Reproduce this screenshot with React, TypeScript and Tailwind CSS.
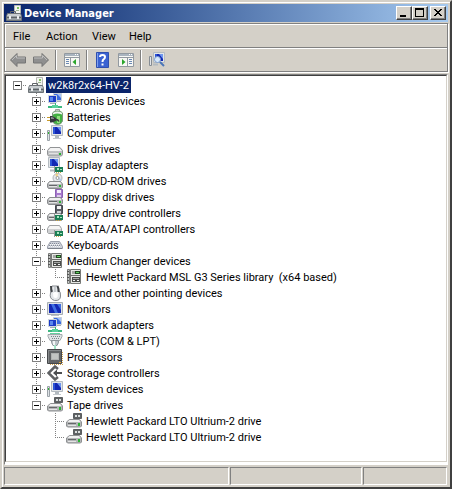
import { useState, type ReactNode } from "react";

type IconName =
  | "root" | "network" | "battery" | "computer" | "disk" | "display" | "dvd"
  | "floppy" | "floppyCtl" | "ide" | "keyboard" | "changer" | "mouse"
  | "monitor" | "port" | "cpu" | "storage" | "tape";

type Device = { label: string; icon: IconName; children?: string[] };

const host = "w2k8r2x64-HV-2";

const devices: Device[] = [
  { label: "Acronis Devices", icon: "network" },
  { label: "Batteries", icon: "battery" },
  { label: "Computer", icon: "computer" },
  { label: "Disk drives", icon: "disk" },
  { label: "Display adapters", icon: "display" },
  { label: "DVD/CD-ROM drives", icon: "dvd" },
  { label: "Floppy disk drives", icon: "floppy" },
  { label: "Floppy drive controllers", icon: "floppyCtl" },
  { label: "IDE ATA/ATAPI controllers", icon: "ide" },
  { label: "Keyboards", icon: "keyboard" },
  {
    label: "Medium Changer devices",
    icon: "changer",
    children: ["Hewlett Packard MSL G3 Series library  (x64 based)"],
  },
  { label: "Mice and other pointing devices", icon: "mouse" },
  { label: "Monitors", icon: "monitor" },
  { label: "Network adapters", icon: "network" },
  { label: "Ports (COM & LPT)", icon: "port" },
  { label: "Processors", icon: "cpu" },
  { label: "Storage controllers", icon: "storage" },
  { label: "System devices", icon: "computer" },
  {
    label: "Tape drives",
    icon: "tape",
    children: ["Hewlett Packard LTO Ultrium-2 drive", "Hewlett Packard LTO Ultrium-2 drive"],
  },
];

/* Low drive body, shared by the drive icons */
const drive = (
  <>
    <path d="M2.500 8.500h11l2 2.500v3l-1 1.500h-13l-1-1.500v-3z" fill="#b4b6b8" stroke="#8a8c8e" />
    <path d="M3 9h10l1.500 2h-13z" fill="#f0f0f0" />
    <path d="M2 12.500h8" stroke="#66686a" />
    <path d="M2 13.500h8" stroke="#e4e4e4" />
    <path d="M12 12h2v2h-2z" fill="#2bb534" />
  </>
);

const card = (
  <>
    <path d="M8 10h8v5H8z" fill="#1c7f56" />
    <path d="M10 11h2v2h-2zM13 12h2v1h-2z" fill="#a9e6c0" />
    <path d="M9 15.500h5" stroke="#c9a94a" strokeDasharray="1 1" />
    <path d="M7.500 9v7" stroke="#9a9a9a" />
  </>
);

const screen = (
  <>
    <path d="M4.500.5h11v10h-11z" fill="#e2e5e8" stroke="#b3bac0" />
    <path d="M6 2h8v7H6z" fill="#1228b4" />
    <path d="M10 2h4v5z" fill="#6f97ee" />
    <path d="M6 2h2v7H6z" fill="#2c55d6" />
  </>
);

const icons: Record<IconName, ReactNode> = {
  root: (
    <>
      <path d="M8.500.5h6v9h-6z" fill="#f3f4f0" stroke="#b5b8b3" />
      <path d="M11 2h2v2h-2z" fill="#7cc35c" />
      <path d="M10 5h3v1h-3z" fill="#9db894" />
      <path d="M4.500 8.500v-2h5v2" fill="none" stroke="#5f6468" />
      <path d="M1.500 8.500h13l1 3v4h-15v-4z" fill="#989fa3" stroke="#6d7377" />
      <path d="M2 9h12l1 2H1z" fill="#c9ced1" />
      <path d="M1 12.500h14" stroke="#5c6266" />
      <path d="M3 11h2v3H3zM11 11h2v3h-2z" fill="#eceef0" />
    </>
  ),
  network: (
    <>
      <path d="M6.500.5h8v7h-8z" fill="#3a6be0" stroke="#c9d1d8" />
      <path d="M10 1h4v4z" fill="#a4c2f7" />
      <path d="M1.500 2.500h8v7h-8z" fill="#1a3cc8" stroke="#cfd6dc" />
      <path d="M3 4h3v4H3z" fill="#5c88ec" />
      <path d="M3 10.500h6M10 8.500h4" stroke="#a6afb5" />
      <path d="M8 10h1v3H8z" fill="#35b77a" />
      <path d="M1 14h14" stroke="#3db880" strokeWidth="2" />
      <path d="M5 12h6v3H5z" fill="#58d39b" />
    </>
  ),
  battery: (
    <>
      <path d="M8.500.5h4v2h-4z" fill="#e6eae6" stroke="#9a9f9a" />
      <path d="M5.500 4q1-2 5-2t5 2v8q-1 3.500-5 3.500t-5-3.500z" fill="#42b042" stroke="#7d9a7d" />
      <path d="M6 4q1-1.500 4.500-1.500T15 4v1.500q-5-2-9 0z" fill="#eef3ee" />
      <path d="M10 7h3v7h-3z" fill="#8fe07c" />
      <path d="M0 8.500h3M0 11.500h3" stroke="#c89b2c" />
      <path d="M3 7h2l4 2v3l-4 1.500H3z" fill="#34373a" />
      <path d="M4 8h1l2 1v1H4z" fill="#85898c" />
      <path d="M9 10.500q2 0 3 2" fill="none" stroke="#34383a" strokeWidth="1.500" />
    </>
  ),
  computer: (
    <>
      <path d="M.5 5.500h2v10h-2z" fill="#dfe3e6" stroke="#9ba2a8" />
      <path d="M1 7h1v2H1z" fill="#2fb52f" />
      {screen}
      <path d="M8 11h4v2H8z" fill="#b3bac0" />
      <path d="M6 13.500h8" stroke="#c3c9ce" />
    </>
  ),
  disk: (
    <>
      <path d="M3 6.500h10l2.500 3v4l-1 1.500h-13l-1-1.500v-4z" fill="#bfc1c3" stroke="#929496" />
      <path d="M3.500 7h9l2.500 3H1z" fill="#f4f4f4" />
      <path d="M2 12.500h9" stroke="#e3e3e3" />
      <path d="M12 12h2v2h-2z" fill="#26b431" />
    </>
  ),
  display: (
    <>
      <g transform="translate(-3 0)">{screen}</g>
      <path d="M3 13.500h4" stroke="#b3bac0" strokeWidth="2" />
      {card}
    </>
  ),
  dvd: (
    <>
      <circle cx="10.500" cy="5" r="4.500" fill="#e6e8eb" stroke="#b0b3b7" />
      <path d="M10.500 5L8 1.500l3-1z" fill="#f0cf80" />
      <path d="M10.500 5l4 1-1 2.500z" fill="#b4ccf2" />
      <circle cx="10.500" cy="5" r="1.500" fill="#fff" stroke="#94989c" />
      {drive}
    </>
  ),
  floppy: (
    <>
      <path d="M8.500.5h7v8h-7z" fill="#a678cc" stroke="#8d62b3" />
      <path d="M10 1h4v3h-4z" fill="#f3edf8" />
      <path d="M10 6h4v2h-4z" fill="#dccbea" />
      {drive}
    </>
  ),
  floppyCtl: (
    <>
      <path d="M8.500.5h7v8h-7z" fill="#5a5d65" stroke="#44474e" />
      <path d="M10 1h4v3h-4z" fill="#f2f2f2" />
      <path d="M10 6h4v2h-4z" fill="#cdd1d6" />
      {drive}
      {card}
    </>
  ),
  ide: (
    <>
      <path d="M2.500 4.500h10l2 3v5h-13l-1-1v-4z" fill="#cfd1d3" stroke="#a0a2a4" />
      <path d="M3 5h9l2 3H1z" fill="#f6f6f6" />
      {card}
    </>
  ),
  keyboard: (
    <>
      <path d="M3.500 4.500h9l3 5v2h-15v-2z" fill="#cdd1d9" stroke="#9a9faa" />
      <path d="M3 6.500h10M2 8.500h12" stroke="#858b98" strokeDasharray="1 1" />
      <path d="M3 7.500h10M2 9.500h12" stroke="#f7f7f7" strokeDasharray="1 1" />
      <path d="M1 11.500h14" stroke="#7c828c" />
    </>
  ),
  changer: (
    <>
      <path d="M1.500.5h2v14h-2z" fill="#c9cbc9" stroke="#7b7d7b" />
      <path d="M1 2.500h2M1 5.500h2M1 8.500h2M1 11.500h2" stroke="#555" />
      <path d="M4.500.5h10v14h-10z" fill="#e6e7e4" stroke="#767876" />
      <path d="M6 2h3v3H6z" fill="#a3a6a3" />
      <path d="M9 2h5v3H9z" fill="#214a21" />
      <path d="M10 3h3v1h-3z" fill="#5fd05f" />
      <path d="M5 6.500h9" stroke="#6e706e" />
      <path d="M6 8h8v5H6z" fill="#4b4d4b" />
      <path d="M7 9.500h6" stroke="#a5a7a5" />
      <path d="M7 11h2v1H7zM11 11h2v1h-2z" fill="#f1f1f1" />
    </>
  ),
  mouse: (
    <>
      <path d="M5 1Q4 4 3.500 8q-1.500 6 4 7.500 6 .5 6-4.500 .5-4-2-6L10.500 1z" fill="#e4e7ea" stroke="#85898e" />
      <path d="M4 1q0 4 1 6M10.500 1q1.500 3 1 6" fill="none" stroke="#3f4246" strokeWidth="2" />
      <path d="M6 8q2.500-2 5 0l-.5 4q-2 2-4 0z" fill="#fff" />
      <path d="M7 2h2v5H7z" fill="#c4c8cc" />
    </>
  ),
  monitor: (
    <>
      <path d="M.5 1.500h15v12H.5z" fill="#dfe2e5" stroke="#a6adb3" />
      <path d="M2 3h12v9H2z" fill="#1228b4" />
      <path d="M4 3h3l4 9H8zM10 3h4v6z" fill="#3f6fe2" />
      <path d="M4 14.500h8" stroke="#bcc2c7" />
    </>
  ),
  port: (
    <>
      <path d="M3 .5h10" stroke="#63d09f" />
      <path d="M1 1.500h14v2l-2 4H3l-2-4z" fill="#dfe3e5" stroke="#a2a9ad" />
      <path d="M4 3.500h9M5 5.500h7" stroke="#7b8388" strokeDasharray="1 1" />
      <path d="M4.500 7.500h7v2l-1.500 3H6l-1.500-3z" fill="#bcc4c8" stroke="#8c9499" />
      <path d="M7 12h2v4H7z" fill="#a4e3c7" />
      <path d="M6 8h2v4H6z" fill="#f2f5f6" />
    </>
  ),
  cpu: (
    <>
      <path d="M3 15.500h13M15.500 3v12" stroke="#cfa04a" strokeDasharray="1 1" />
      <path d="M.5.5h14v14H.5z" fill="#626466" stroke="#45474a" />
      <path d="M1 1.500h13M1.500 1v13" stroke="#85888a" />
      <path d="M4 4h8v7H4z" fill="#b0b2b1" />
      <path d="M5 5h6v5H5z" fill="#c2c4c2" />
      <path d="M12 13h2v1h-2z" fill="#e0a73a" />
    </>
  ),
  storage: (
    <>
      <path d="M11 4L8 1.500 1.500 8 8 14.500l3-2.500" fill="none" stroke="#5f6163" strokeWidth="2.500" />
      <path d="M6 8l4-3.500V7h5v2h-5v2.500z" fill="#4d4f51" />
    </>
  ),
  tape: (
    <>
      <path d="M7.500.5h8v5h-8z" fill="#5f6365" stroke="#5a5d5f" />
      <path d="M9 2h2v2H9zM12 2h2v2h-2z" fill="#dde0e0" />
      <path d="M3.500 6.500h10l2 2.500v4l-1 1h-13l-1-1V9z" fill="#b4b6b8" stroke="#8e9092" />
      <path d="M3.500 7h9.500l1.500 2h-13z" fill="#f0f0f0" />
      <path d="M2 10.500h8" stroke="#66686a" />
      <path d="M2 12.500h8" stroke="#e4e4e4" />
      <path d="M12 10h2v3h-2z" fill="#2bb534" />
    </>
  ),
};

function Glyph({ name }: { name: IconName }) {
  return (
    <svg viewBox="0 0 16 16" className="ml-px size-4 shrink-0" aria-hidden="true">
      {icons[name]}
    </svg>
  );
}

type BranchProps = { up?: boolean; down?: boolean; across?: boolean; box?: "plus" | "minus" };

/* One indent step of the tree: dotted connectors, plus the expander box if there is one */
function Branch({ up, down, across, box }: BranchProps) {
  return (
    <svg viewBox="0 0 19 16" className="h-4 w-[19px] shrink-0" shapeRendering="crispEdges" aria-hidden="true">
      <g stroke="#808080" strokeDasharray="1 1" fill="none">
        {up && <path d="M9.500 0v8" />}
        {down && <path d="M9.500 8v8" />}
        {across && <path d="M9 8.500h10" />}
      </g>
      {box && (
        <>
          <path d="M5.500 4.500h8v8h-8z" fill="#fff" stroke="#808080" />
          <path d={box === "plus" ? "M7 8.500h5M9.500 6v5" : "M7 8.500h5"} stroke="#000" />
        </>
      )}
    </svg>
  );
}

const Label = ({ text }: { text: string }) => (
  <span className="ml-0.5 h-4 px-0.5 pt-px whitespace-pre">{text}</span>
);

function DeviceRow({ device, last }: { device: Device; last: boolean }) {
  const [open, setOpen] = useState(!!device.children);
  const kids = open ? device.children ?? [] : [];

  return (
    <li>
      <div className="flex h-4 items-center pl-[21px]">
        <button type="button" aria-label={`Toggle ${device.label}`} onClick={() => setOpen(!open)}>
          <Branch up down={!last} across box={open ? "minus" : "plus"} />
        </button>
        <Glyph name={device.icon} />
        <Label text={device.label} />
      </div>
      {kids.length > 0 && (
        <ul>
          {kids.map((kid, i) => (
            <li key={i} className="flex h-4 items-center pl-[21px]">
              <Branch up={!last} down={!last} />
              <Branch up down={i < kids.length - 1} across />
              <Glyph name={device.icon} />
              <Label text={kid} />
            </li>
          ))}
        </ul>
      )}
    </li>
  );
}

function CaptionButton({ label, children }: { label: string; children: ReactNode }) {
  return (
    <button
      type="button"
      aria-label={label}
      className="h-3.5 w-4 border border-t-white border-r-[#404040] border-b-[#404040] border-l-white bg-[#d4d0c8] shadow-[inset_-1px_-1px_0_#808080]"
    >
      <svg viewBox="0 0 14 12" className="h-3 w-3.5" shapeRendering="crispEdges">
        {children}
      </svg>
    </button>
  );
}

function ToolButton({ label, children }: { label: string; children: ReactNode }) {
  return (
    <button type="button" aria-label={label} className="flex h-[22px] w-[23px] items-center justify-center">
      <svg viewBox="0 0 16 16" className="size-4">{children}</svg>
    </button>
  );
}

const ToolDivider = () => <span className="mx-[3px] h-5 w-0.5 border-l border-l-[#808080] bg-white" />;

const arrow = (
  <>
    <path d="M.5 8L7 1.500V5h8.500v6H7v3.500z" fill="#8f8f8f" stroke="#757575" />
    <path d="M2 8l4.500-4.500V6H15" fill="none" stroke="#bdbdbd" />
  </>
);

const panes = (
  <>
    <path d="M.5 1.500h15v13H.5z" fill="#f7f7f4" stroke="#9299a0" />
    <path d="M1 2h14v2H1z" fill="#a9b4bf" />
    <path d="M11 2.500h1M13 2.500h1" stroke="#fff" />
    <path d="M1 5.500h14" stroke="#9299a0" />
  </>
);

export default function App() {
  return (
    <main className="flex min-h-screen flex-col border-2 border-t-[#d4d0c8] border-r-[#404040] border-b-[#404040] border-l-[#d4d0c8] bg-[#d4d0c8] p-0.5 font-['Roboto',sans-serif] text-[11px] leading-4 text-black shadow-[inset_1px_1px_0_#fff]">
      <header className="flex h-[18px] items-center bg-linear-to-r from-[#0a246a] to-[#a6caf0] pr-0.5 pl-0.5">
        <svg viewBox="0 0 16 16" className="size-4">{icons.root}</svg>
        <h1 className="ml-0.5 h-4 flex-1 pt-px font-['DejaVu_Sans_Condensed','DejaVu_Sans',sans-serif] font-bold text-white">
          Device Manager
        </h1>
        <CaptionButton label="Minimize">
          <path d="M3 8h6v2H3z" />
        </CaptionButton>
        <CaptionButton label="Maximize">
          <path d="M2 1h9v9H2zM3 3v6h7V3z" fillRule="evenodd" />
        </CaptionButton>
        <span className="w-0.5" />
        <CaptionButton label="Close">
          <path d="M3 2h2v1h1v1h2V3h1V2h2v1h-1v1H9v1H8v1h1v1h1v1h1v1H9V8H8V7H6v1H5v1H3V8h1V7h1V6h1V5H5V4H4V3H3z" />
        </CaptionButton>
      </header>

      <div className="mt-px border border-[#808080] shadow-[1px_1px_0_#fff,inset_1px_1px_0_#fff]">
        <nav className="flex h-[23px] items-center gap-[13px] pt-0.5 pl-2">
          <button type="button" className="w-5 text-left">File</button>
          <button type="button" className="w-[33px] text-left">Action</button>
          <button type="button" className="w-6 text-left">View</button>
          <button type="button" className="w-6 text-left">Help</button>
        </nav>
        <div className="flex h-6 items-center border-t border-t-[#808080] pl-px shadow-[inset_0_1px_0_#fff]">
          <ToolButton label="Back">{arrow}</ToolButton>
          <ToolButton label="Forward">
            <g transform="matrix(-1 0 0 1 16 0)">{arrow}</g>
          </ToolButton>
          <ToolDivider />
          <ToolButton label="Show or hide console tree">
            {panes}
            <path d="M6.500 6v8" stroke="#9299a0" />
            <path d="M2 7.500h3M2 9.500h3M2 11.500h3" stroke="#6a88b4" />
            <path d="M12 7v6L8.500 10z" fill="#2ba52b" />
          </ToolButton>
          <ToolDivider />
          <ToolButton label="Help topics">
            <path d="M1.500.5h12v15h-12z" fill="#3a62d2" stroke="#2f4fae" />
            <path d="M2 1h1v14H2z" fill="#7d9eee" />
            <path d="M5 5q0-2 2.500-2T10 5q0 1.500-1.500 2.500-1 .5-1 2.500" fill="none" stroke="#fff" strokeWidth="2" />
            <path d="M6.500 11.500h2v2h-2z" fill="#fff" />
          </ToolButton>
          <ToolButton label="Show or hide action pane">
            {panes}
            <path d="M9.500 6v8" stroke="#9299a0" />
            <path d="M11 7.500h3M11 9.500h3M11 11.500h3" stroke="#6a88b4" />
            <path d="M4 7v6l3.500-3z" fill="#2ba52b" />
          </ToolButton>
          <ToolDivider />
          <ToolButton label="Scan for hardware changes">
            <path d="M.5 4.500h2v9h-2z" fill="#e2e5e8" stroke="#858c94" />
            {screen}
            <path d="M4 12.500h5" stroke="#b3bac0" strokeWidth="2" />
            <circle cx="8.500" cy="7.500" r="3" fill="#d6e8fb" stroke="#7d9ccb" />
            <path d="M11 10l4 4" stroke="#4b76b8" strokeWidth="2" />
          </ToolButton>
        </div>
      </div>

      <section className="mt-0.5 flex-1 border border-t-[#808080] border-r-white border-b-white border-l-[#808080] bg-white">
        <div className="h-full border border-t-[#404040] border-r-[#d4d0c8] border-b-[#d4d0c8] border-l-[#404040] pt-px pb-4">
          <div className="flex h-4 items-center pl-0.5">
            <Branch across box="minus" />
            <Glyph name="root" />
            <span className="ml-0.5 h-4 bg-[#0a246a] px-0.5 pt-px text-white">{host}</span>
          </div>
          <ul>
            {devices.map((d, i) => (
              <DeviceRow key={d.label} device={d} last={i === devices.length - 1} />
            ))}
          </ul>
        </div>
      </section>

      <footer className="mt-0.5 grid h-[18px] shrink-0 grid-cols-[225fr_132fr_84fr] gap-px pr-px">
        <span className="border border-t-[#808080] border-r-white border-b-white border-l-[#808080]" />
        <span className="border border-t-[#808080] border-r-white border-b-white border-l-[#808080]" />
        <span className="border border-t-[#808080] border-r-white border-b-white border-l-[#808080]" />
      </footer>
    </main>
  );
}
